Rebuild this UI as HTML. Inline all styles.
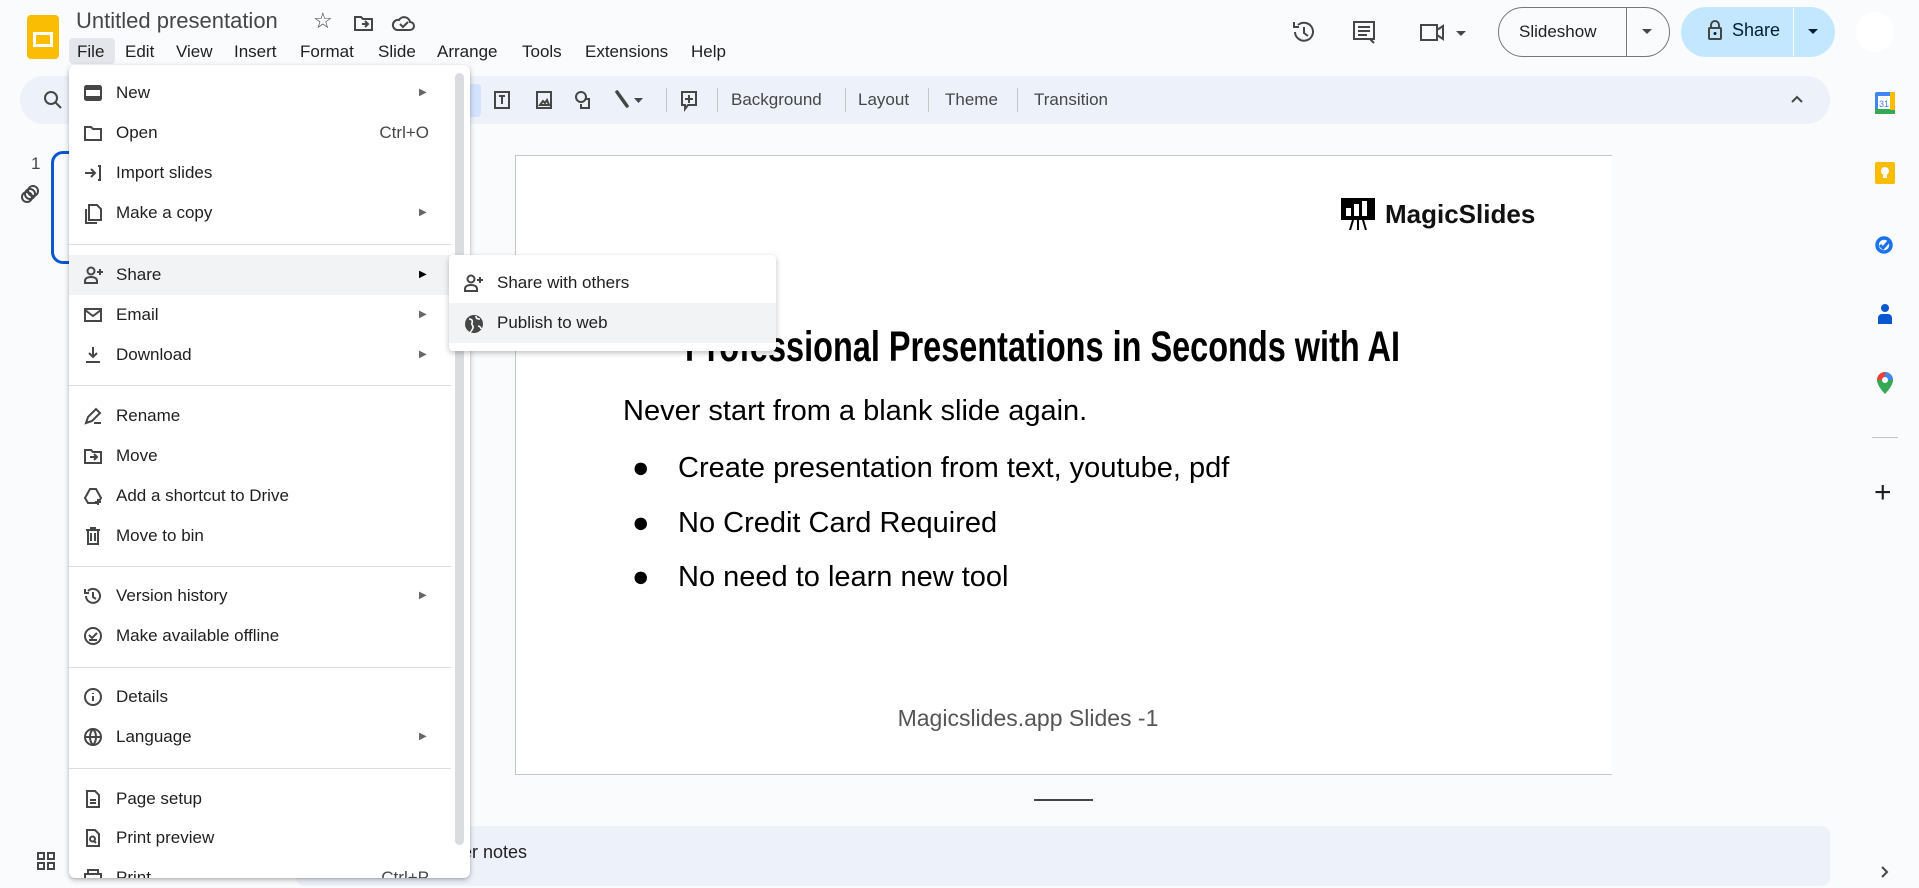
<!DOCTYPE html>
<html><head><meta charset="utf-8"><style>
*{margin:0;padding:0;box-sizing:border-box}
body{width:1919px;height:888px;overflow:hidden;background:#f9fbfd;font-family:"Liberation Sans",sans-serif;color:#1f1f1f;position:relative}
.a{position:absolute}
.menu-bar span{margin-right:0;position:absolute;top:0;font-size:17px}
.tb{left:20px;top:76px;width:1810px;height:48px;background:#edf2fa;border-radius:24px}
.ic{stroke:#444746;fill:none;stroke-width:2}
.dd{left:69px;top:65px;width:401px;height:813px;background:#fff;border-radius:6px;box-shadow:0 2px 6px rgba(0,0,0,.25),0 1px 2px rgba(0,0,0,.1);overflow:hidden}
.it{position:absolute;left:0;width:382px;height:40px;font-size:17px;line-height:40px;padding-left:47px}
.it svg{position:absolute;left:14px;top:10px}
.arr{position:absolute;left:350px;top:0;font-size:10px;color:#666}
.sep{position:absolute;left:0;width:382px;height:1px;background:#dadce0}
.hl{background:#f1f3f4}
.sub{left:449px;top:255px;width:327px;height:96px;background:#fff;border-radius:4px;box-shadow:0 2px 6px rgba(0,0,0,.25)}
.rp{left:1872px;width:26px;height:26px}
</style></head><body>
<div class="a" style="left:27px;top:15px;width:32px;height:44px;background:#fbbc04;border-radius:4px"></div>
<div class="a" style="left:33px;top:32px;width:20px;height:15px;border:3px solid #fff"></div>
<div class="a" style="left:76px;top:8px;font-size:22px;color:#444746">Untitled presentation</div>
<div class="a" style="left:313px;top:8px;font-size:22px;color:#444746">☆</div>
<svg class="a" style="left:352px;top:12px" width="24" height="22"><path class="ic" d="M3 5h6l2 2h9v11H3z M10 12h6 M13 9l3 3-3 3"/></svg>
<svg class="a" style="left:390px;top:12px" width="26" height="22"><path class="ic" d="M7 18h13a4 4 0 0 0 0-8 6 6 0 0 0-11-2A5 5 0 0 0 7 18z M10 12l3 3 5-5"/></svg>
<div class="a" style="left:69px;top:38px;width:46px;height:26px;background:#e3e6ea;border-radius:4px"></div>
<div class="a menu-bar" style="left:0;top:42px">
<span style="left:77px">File</span><span style="left:125px">Edit</span><span style="left:176px">View</span><span style="left:234px">Insert</span><span style="left:300px">Format</span><span style="left:378px">Slide</span><span style="left:437px">Arrange</span><span style="left:522px">Tools</span><span style="left:585px">Extensions</span><span style="left:691px">Help</span></div>
<svg class="a" style="left:1290px;top:18px" width="28" height="28"><path class="ic" d="M5 14a9 9 0 1 0 3-7 M4 4v5h5 M14 9v6l4 3" stroke-width="2.4"/></svg>
<svg class="a" style="left:1350px;top:18px" width="28" height="30"><path class="ic" d="M4 4h20v17H4z M8 9h12 M8 13h12 M8 17h9 M20 21l4 4" stroke-width="2.4"/></svg>
<svg class="a" style="left:1418px;top:20px" width="50" height="26"><path class="ic" d="M3 5h16v15H3z M19 10l6-4v13l-6-4" stroke-width="2.4" fill="none"/><path d="M38 11h10l-5 5z" fill="#444746"/></svg>
<div class="a" style="left:1498px;top:7px;width:172px;height:50px;border:1px solid #747775;border-radius:25px"></div>
<div class="a" style="left:1626px;top:8px;width:1px;height:48px;background:#747775"></div>
<div class="a" style="left:1519px;top:22px;font-size:17px;color:#1f1f1f">Slideshow</div>
<svg class="a" style="left:1640px;top:26px" width="14" height="10"><path d="M2 3h10l-5 5z" fill="#444746"/></svg>
<div class="a" style="left:1681px;top:7px;width:154px;height:50px;background:#c2e7ff;border-radius:25px"></div>
<div class="a" style="left:1793px;top:8px;width:1px;height:48px;background:#fff"></div>
<svg class="a" style="left:1706px;top:18px" width="18" height="24"><rect x="3" y="10" width="12" height="11" rx="1" class="ic" stroke="#001d35"/><path d="M5 10V7a4 4 0 0 1 8 0v3" class="ic" stroke="#001d35"/><circle cx="9" cy="15.5" r="1.5" fill="#001d35"/></svg>
<div class="a" style="left:1732px;top:20px;font-size:18px;color:#001d35">Share</div>
<svg class="a" style="left:1806px;top:26px" width="14" height="10"><path d="M2 3h10l-5 5z" fill="#001d35"/></svg>
<div class="a" style="left:1856px;top:12px;width:38px;height:40px;background:#fff;border-radius:50%"></div>
<div class="a tb"></div>
<svg class="a" style="left:42px;top:89px" width="22" height="22"><circle cx="9" cy="9" r="6" class="ic"/><path d="M13 13l6 6" class="ic"/></svg>
<div class="a" style="left:453px;top:84px;width:28px;height:33px;background:#d3e3fd;border-radius:4px"></div>
<svg class="a" style="left:490px;top:86px" width="210" height="30"><path class="ic" d="M5 6h14v16H5z M9 10h6 M12 10v8" stroke-width="1.8"/><path class="ic" d="M47 6h14v16H47z M50 19l3-4 2 2 2-3 2 5z" stroke-width="1.8"/><circle cx="91" cy="11" r="5" class="ic" stroke-width="1.8"/><path class="ic" d="M95 13h4v9h-8v-4" stroke-width="1.8"/><path d="M127 6l10 14" stroke="#444746" stroke-width="3.5" stroke-linecap="round"/><path d="M144 12h9l-4.5 5z" fill="#444746"/><path class="ic" d="M192 6h14v13h-8l-3 4v-4h-3z M199 9v8 M195 13h8" stroke-width="1.8"/></svg>
<div class="a" style="left:666px;top:88px;width:1px;height:24px;background:#c4c7c5"></div>
<div class="a" style="left:717px;top:88px;width:1px;height:24px;background:#c4c7c5"></div>
<div class="a" style="left:845px;top:88px;width:1px;height:24px;background:#c4c7c5"></div>
<div class="a" style="left:928px;top:88px;width:1px;height:24px;background:#c4c7c5"></div>
<div class="a" style="left:1017px;top:88px;width:1px;height:24px;background:#c4c7c5"></div>
<div class="a" style="left:731px;top:90px;font-size:17px;color:#444746">Background</div>
<div class="a" style="left:858px;top:90px;font-size:17px;color:#444746">Layout</div>
<div class="a" style="left:945px;top:90px;font-size:17px;color:#444746">Theme</div>
<div class="a" style="left:1034px;top:90px;font-size:17px;color:#444746">Transition</div>
<svg class="a" style="left:1789px;top:93px" width="16" height="12"><path d="M3 9l5-5 5 5" class="ic"/></svg>
<div class="a" style="left:31px;top:154px;font-size:17px;color:#444746">1</div>
<svg class="a" style="left:18px;top:183px" width="24" height="24"><circle cx="9" cy="14" r="5" class="ic" stroke-width="1.6"/><circle cx="12" cy="11" r="5" class="ic" stroke-width="1.6"/><circle cx="15" cy="8" r="5" class="ic" stroke-width="1.6"/></svg>
<div class="a" style="left:51px;top:151px;width:40px;height:113px;border:3px solid #0b57d0;border-radius:12px"></div>
<svg class="a" style="left:36px;top:851px" width="20" height="20"><path class="ic" d="M2 2h6v6H2z M12 2h6v6h-6z M2 12h6v6H2z M12 12h6v6h-6z" stroke-width="1.6"/></svg>
<div class="a" style="left:515px;top:155px;width:1097px;height:620px;background:#fff;border:1px solid #c4c7c5;border-right:none"></div>
<svg class="a" style="left:1341px;top:198px" width="36" height="32"><rect x="0" y="0" width="34" height="22" fill="#000"/><rect x="5" y="10" width="5" height="8" fill="#fff"/><rect x="13" y="6" width="5" height="12" fill="#fff"/><rect x="21" y="3" width="5" height="15" fill="#fff"/><path d="M12 22l-3 10 M17 22v10 M22 22l3 10" stroke="#000" stroke-width="2"/></svg>
<div class="a" style="left:1385px;top:199px;font-size:26px;font-weight:bold;color:#111">MagicSlides</div>
<div class="a" style="left:685px;top:323px;white-space:nowrap;font-family:'Liberation Sans Narrow','Liberation Sans',sans-serif;font-weight:bold;font-size:43px;color:#000;transform:scaleX(.755);transform-origin:left">Professional Presentations in Seconds with AI</div>
<div class="a" style="left:623px;top:395px;font-size:29px;color:#000">Never start from a blank slide again.</div>
<div class="a" style="left:632px;top:441px;font-size:29px;color:#000;line-height:54.5px">●<br>●<br>●</div>
<div class="a" style="left:678px;top:441px;font-size:29px;color:#000;line-height:54.5px">Create presentation from text, youtube, pdf<br>No Credit Card Required<br>No need to learn new tool</div>
<div class="a" style="left:828px;top:705px;width:400px;text-align:center;font-size:23px;color:#555;white-space:nowrap">Magicslides.app Slides -1</div>
<div class="a" style="left:1034px;top:799px;width:59px;height:2px;background:#444"></div>
<div class="a" style="left:296px;top:826px;width:1534px;height:60px;background:#edf2fa;border-radius:8px"></div>
<div class="a" style="left:462px;top:842px;font-size:18px;color:#1f1f1f">er notes</div>
<svg class="a rp" style="top:90px"><rect x="3" y="2" width="20" height="22" rx="2" fill="#4285f4"/><rect x="3" y="19" width="20" height="5" fill="#34a853"/><rect x="18" y="2" width="5" height="18" fill="#fbbc04"/><rect x="6" y="6" width="12" height="13" fill="#fff"/><text x="12" y="17" font-size="9" text-anchor="middle" fill="#4285f4" font-family="Liberation Sans">31</text></svg>
<svg class="a rp" style="top:160px"><rect x="3" y="2" width="20" height="22" rx="2" fill="#fbbc04"/><circle cx="13" cy="11" r="4" fill="#fff"/><rect x="11" y="15" width="4" height="3" fill="#fff"/></svg>
<svg class="a rp" style="top:231px"><circle cx="12" cy="14" r="7" fill="none" stroke="#1a73e8" stroke-width="3.5"/><path d="M8 14l3 3 7-8" stroke="#1a73e8" stroke-width="3" fill="none"/></svg>
<svg class="a rp" style="top:300px"><circle cx="13" cy="8" r="4" fill="#0b57d0"/><path d="M6 24v-6a4 4 0 0 1 4-4h6a4 4 0 0 1 4 4v6z" fill="#0b57d0"/></svg>
<svg class="a rp" style="top:370px"><path d="M13 2a8 8 0 0 0-8 8c0 6 8 14 8 14s8-8 8-14a8 8 0 0 0-8-8z" fill="#34a853"/><path d="M5 10a8 8 0 0 1 8-8l0 8z" fill="#ea4335"/><path d="M13 2a8 8 0 0 1 8 8h-8z" fill="#4285f4"/><circle cx="13" cy="10" r="3" fill="#fff"/></svg>
<div class="a" style="left:1872px;top:437px;width:26px;height:1px;background:#c4c7c5"></div>
<div class="a" style="left:1874px;top:476px;font-size:30px;color:#1f1f1f;font-weight:300">+</div>
<svg class="a" style="left:1878px;top:864px" width="14" height="16"><path d="M4 3l5 5-5 5" class="ic"/></svg>
<div class="a dd">
<div class="it" style="top:8px"><svg width="20" height="20"><rect x="2" y="3" width="16" height="14" rx="1.5" class="ic"/><rect x="2" y="3" width="16" height="4" fill="#444746"/><rect x="2" y="13" width="16" height="4" fill="#444746"/></svg>New<span class="arr">▶</span></div>
<div class="it" style="top:48px"><svg width="20" height="20"><path class="ic" d="M2 4h6l2 2h8v11H2z" stroke-width="1.7"/></svg>Open<span style="position:absolute;right:22px;top:0;color:#444746">Ctrl+O</span></div>
<div class="it" style="top:88px"><svg width="20" height="20"><path class="ic" d="M2 10h10 M8 6l4 4-4 4 M15 3h2v14h-2" stroke-width="1.7"/></svg>Import slides</div>
<div class="it" style="top:128px"><svg width="20" height="22"><path class="ic" d="M6 2h8l4 4v11H6z M3 6v14h11" stroke-width="1.7"/></svg>Make a copy<span class="arr">▶</span></div>
<div class="sep" style="top:179px"></div>
<div class="it hl" style="top:190px"><svg width="22" height="20"><circle cx="8" cy="6" r="3.5" class="ic" stroke-width="1.7"/><path class="ic" d="M2 18v-2c0-3 3-4 6-4s6 1 6 4v2z M17 4v6 M14 7h6" stroke-width="1.7"/></svg>Share<span class="arr" style="color:#000">▶</span></div>
<div class="it" style="top:230px"><svg width="20" height="20"><path class="ic" d="M2 4h16v12H2z M2 5l8 6 8-6" stroke-width="1.7"/></svg>Email<span class="arr">▶</span></div>
<div class="it" style="top:270px"><svg width="20" height="20"><path class="ic" d="M10 2v10 M6 8l4 4 4-4 M3 17h14" stroke-width="1.7"/></svg>Download<span class="arr">▶</span></div>
<div class="sep" style="top:320px"></div>
<div class="it" style="top:331px"><svg width="20" height="20"><path class="ic" d="M3 17l2-6 8-8 4 4-8 8z M11 17h7" stroke-width="1.7"/></svg>Rename</div>
<div class="it" style="top:371px"><svg width="20" height="20"><path class="ic" d="M2 4h6l2 2h8v11H2z M7 11h7 M11 8l3 3-3 3" stroke-width="1.7"/></svg>Move</div>
<div class="it" style="top:411px"><svg width="22" height="20"><path class="ic" d="M7 3h6l5 9-3 5H5l-3-5z M15 13v6 M12 16h6" stroke-width="1.7"/></svg>Add a shortcut to Drive</div>
<div class="it" style="top:451px"><svg width="20" height="20"><path class="ic" d="M3 4h14 M5 4v14h10V4 M8 7v8 M12 7v8 M8 4V2h4v2" stroke-width="1.7"/></svg>Move to bin</div>
<div class="sep" style="top:501px"></div>
<div class="it" style="top:511px"><svg width="20" height="20"><path class="ic" d="M3 10a7 7 0 1 0 2-5 M2 3v4h4 M10 6v5l3 2" stroke-width="1.7"/></svg>Version history<span class="arr">▶</span></div>
<div class="it" style="top:551px"><svg width="20" height="20"><circle cx="10" cy="10" r="8" class="ic" stroke-width="1.7"/><path class="ic" d="M6 9l3 3 5-5 M6 14h8" stroke-width="1.7"/></svg>Make available offline</div>
<div class="sep" style="top:602px"></div>
<div class="it" style="top:612px"><svg width="20" height="20"><circle cx="10" cy="10" r="8" class="ic" stroke-width="1.7"/><path class="ic" d="M10 9v5 M10 6v1" stroke-width="1.9"/></svg>Details</div>
<div class="it" style="top:652px"><svg width="20" height="20"><circle cx="10" cy="10" r="8" class="ic" stroke-width="1.7"/><path class="ic" d="M2 10h16 M10 2c-4 4-4 12 0 16 M10 2c4 4 4 12 0 16" stroke-width="1.5"/></svg>Language<span class="arr">▶</span></div>
<div class="sep" style="top:703px"></div>
<div class="it" style="top:714px"><svg width="20" height="20"><path class="ic" d="M4 2h8l4 4v12H4z M7 11h6 M7 14h6" stroke-width="1.7"/></svg>Page setup</div>
<div class="it" style="top:753px"><svg width="20" height="20"><path class="ic" d="M4 2h8l4 4v12H4z" stroke-width="1.7"/><circle cx="9.5" cy="11" r="2.5" class="ic" stroke-width="1.5"/><path class="ic" d="M11 13l2 2" stroke-width="1.5"/></svg>Print preview</div>
<div class="it" style="top:793px"><svg width="20" height="20"><path class="ic" d="M5 2h10v4H5z M2 6h16v8H2z" stroke-width="1.7"/></svg>Print<span style="position:absolute;right:22px;top:0;color:#444746">Ctrl+P</span></div>
<div class="a" style="left:386px;top:8px;width:9px;height:772px;background:#dadce0;border-radius:5px"></div>
</div>
<div class="a sub">
<div class="it" style="top:8px;width:327px;padding-left:48px"><svg width="22" height="20" style="left:14px"><circle cx="8" cy="6" r="3.5" class="ic" stroke-width="1.7"/><path class="ic" d="M2 18v-2c0-3 3-4 6-4s6 1 6 4v2z M17 4v6 M14 7h6" stroke-width="1.7"/></svg>Share with others</div>
<div class="it hl" style="top:48px;width:327px;padding-left:48px"><svg width="22" height="22" style="left:14px"><circle cx="11" cy="11" r="9" fill="#444746"/><path d="M6 6c3 0 4 2 3 4s2 3 1 5-2 4-3 4M13 3c0 3 2 3 4 3M15 13c2 0 3 2 3 3" stroke="#fff" stroke-width="1.6" fill="none"/></svg>Publish to web</div>
</div>
</body></html>
